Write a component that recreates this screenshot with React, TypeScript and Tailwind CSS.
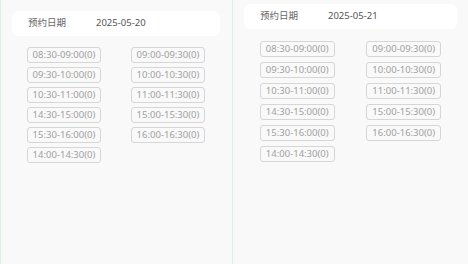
import React from "react";

const left = [
  "08:30-09:00(0)",
  "09:00-09:30(0)",
  "09:30-10:00(0)",
  "10:00-10:30(0)",
  "10:30-11:00(0)",
  "11:00-11:30(0)",
  "14:30-15:00(0)",
  "15:00-15:30(0)",
  "15:30-16:00(0)",
  "16:00-16:30(0)",
  "14:00-14:30(0)",
];

function Panel({ date, top, bordered }: { date: string; top: string; bordered: boolean }) {
  return (
    <div
      className={
        bordered
          ? "w-[233px] h-full bg-[#f9f9f9] border-l border-r border-[#dcefe0] pl-[11px] pr-[12px] pt-[11px]"
          : "flex-1 h-full bg-[#f9f9f9] pl-[11px] pr-[11px] pt-[4px]"
      }
    >
      <div className="h-[25px] bg-white rounded-[6px] flex items-center text-[9.5px] text-[#666]">
        <span className="ml-[16px] w-[68px]">预约日期</span>
        <span className="text-[#555]">{date}</span>
      </div>
      <div className={top === "a" ? "grid grid-cols-2 gap-y-[4px] mt-[11px]" : "grid grid-cols-2 gap-y-[5px] mt-[12px]"}>
        {left.map((t) => (
          <div key={t} className="flex justify-center">
            <span className="h-[16px] px-[5px] flex items-center border border-[#d6d6d6] rounded-[3px] text-[9.5px] text-[#9f9f9f] leading-none">
              {t}
            </span>
          </div>
        ))}
      </div>
    </div>
  );
}

export default function App() {
  return (
    <div
      className="w-[468px] h-[264px] flex bg-[#f9f9f9] overflow-hidden"
      style={{ fontFamily: '"Noto Sans", "Noto Sans CJK SC", sans-serif' }}
    >
      <Panel date="2025-05-20" top="a" bordered />
      <Panel date="2025-05-21" top="b" bordered={false} />
    </div>
  );
}
